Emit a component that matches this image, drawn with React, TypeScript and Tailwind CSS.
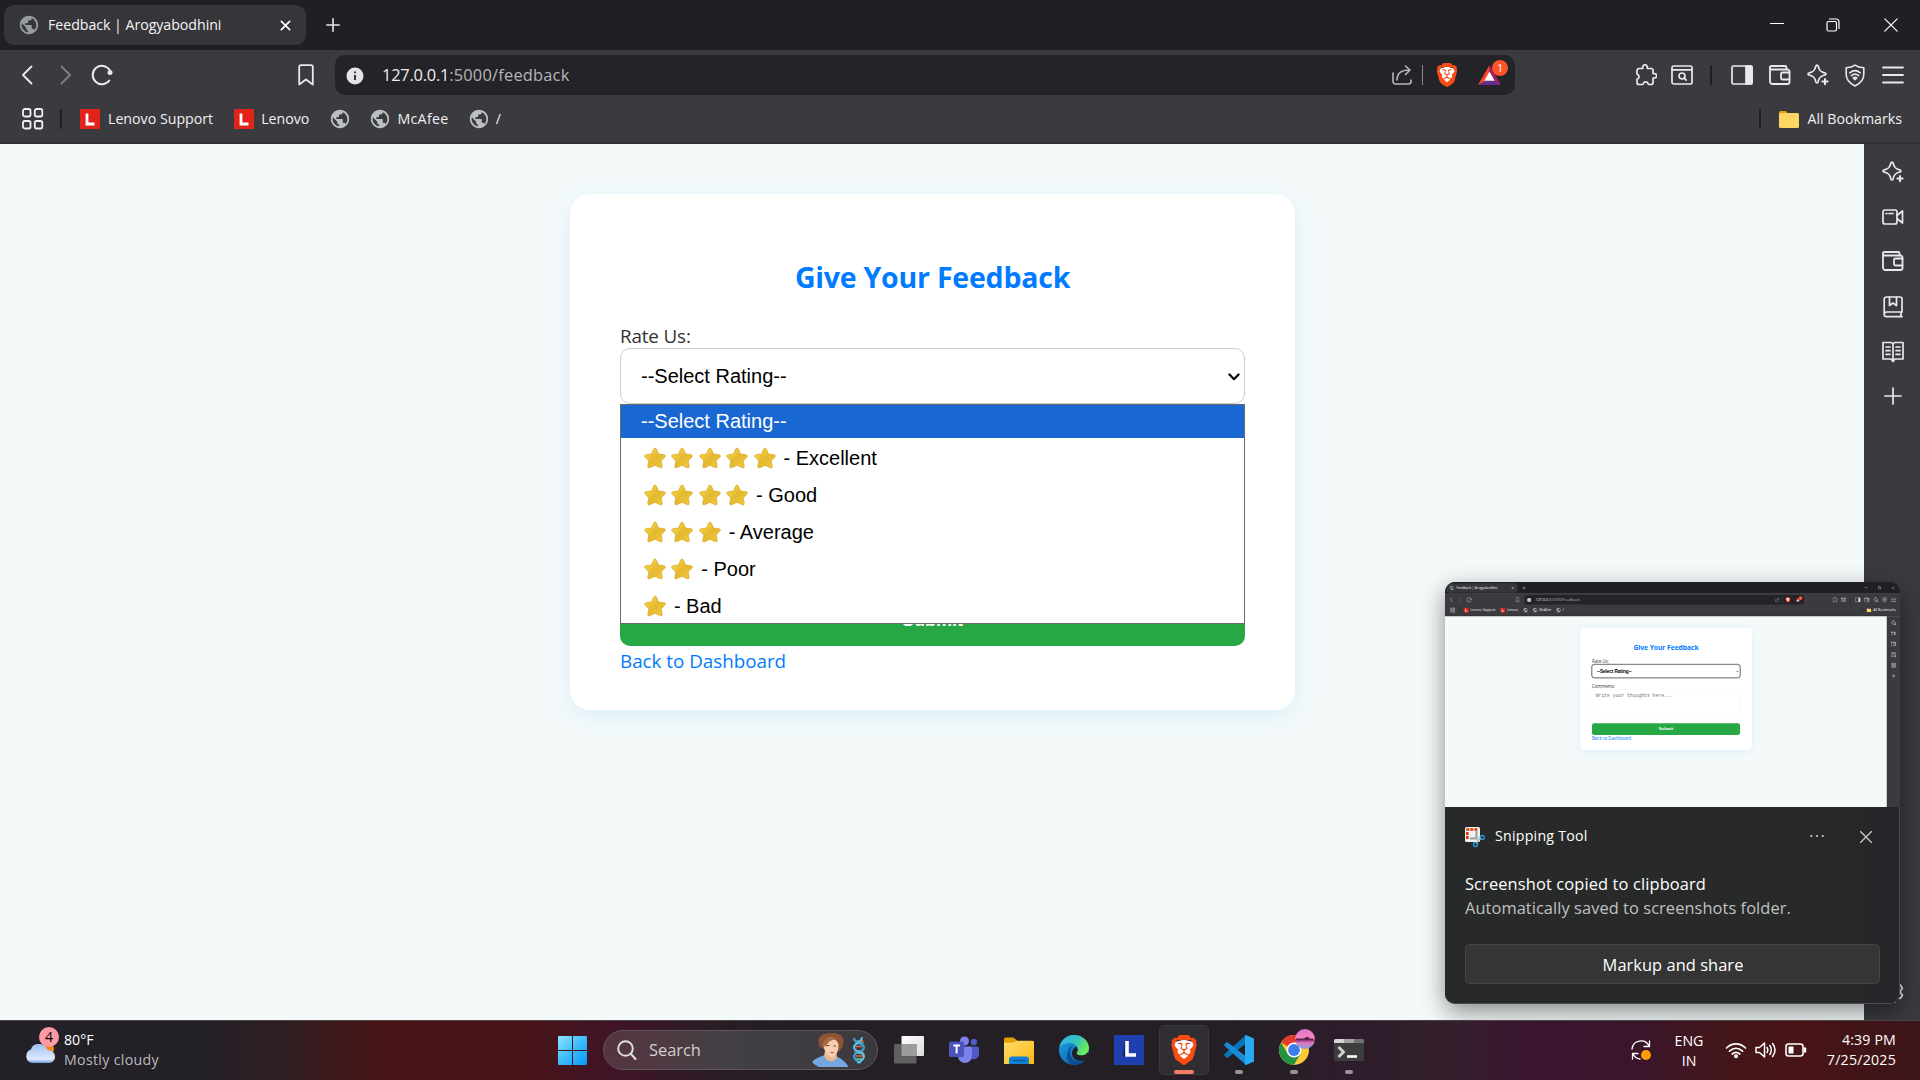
import React, { useLayoutEffect, useRef, useState } from 'react';
import { MdPublic } from 'react-icons/md';
import { SiBrave } from 'react-icons/si';

type TextProps = { w: number; children: string; className?: string };

/** One line of text whose tracking is adjusted so that it fills `w` pixels. */
function T({ w, children, className = '' }: TextProps) {
  const ref = useRef<HTMLSpanElement>(null);
  const [spacing, setSpacing] = useState(0);
  useLayoutEffect(() => {
    const el = ref.current;
    if (!el) return;
    el.style.letterSpacing = '0px';
    const next = (w - el.offsetWidth) / children.length;
    el.style.letterSpacing = `${next}px`;
    setSpacing(next);
  }, [w, children]);
  return (
    <span ref={ref} className={`inline-block whitespace-nowrap ${className}`} style={{ letterSpacing: spacing }}>
      {children}
    </span>
  );
}

type IconProps = { className?: string };

const line = { fill: 'none', stroke: 'currentColor', strokeLinecap: 'round', strokeLinejoin: 'round' } as const;

const Sparkle = ({ className }: IconProps) => (
  <svg viewBox="0 0 22 22" className={`h-[22px] w-[22px] ${className ?? ''}`} {...line} strokeWidth="1.700">
    <path d="M10 1.200c.7 0 1 .5 1.200 1.100.9 4.200 2.300 5.600 6.400 6.500.8.2 1.400.6 1.400 1.200s-.6 1-1.400 1.200c-4.100.9-5.500 2.300-6.400 6.500-.2.7-.5 1.100-1.200 1.100s-1-.4-1.200-1.100c-.9-4.200-2.300-5.600-6.400-6.500C1.600 11 1 10.600 1 10s.6-1 1.400-1.200c4.100-.9 5.500-2.300 6.400-6.500C9 1.700 9.300 1.200 10 1.200z" />
    <path d="M18 14.500v6M15 17.500h6" stroke="#3b3a3f" strokeWidth="5" />
    <path d="M18 15v5.200M15.400 17.600h5.200" strokeWidth="2" />
  </svg>
);

const Wallet = () => (
  <svg viewBox="0 0 22 20" className="h-5 w-[22px]" {...line} strokeWidth="1.800">
    <path d="M1 2.500v14A2.500 2.500 0 0 0 3.500 19h15a2 2 0 0 0 2-2V6.500a2 2 0 0 0-2-2H2.500A1.500 1.500 0 0 1 2.500 1H16a1.500 1.500 0 0 1 1.500 1.500v2" />
    <path d="M20.500 7.500h-7a1.500 1.500 0 0 0-1.500 1.500v4a1.500 1.500 0 0 0 1.500 1.500h7" />
  </svg>
);

const LionShield = ({ className = '' }: IconProps) => (
  <span className={`relative block ${className}`}>
    <svg viewBox="0 0 24 24" className="absolute inset-0 h-full w-full">
      <path d="M5 5.500 12 3.500l7 2 1 4-3 8-5 4-5-4-3-8z" fill="#fff" />
    </svg>
    <SiBrave className="absolute inset-0 h-full w-full text-[#fb4b14]" />
  </span>
);

const Divider = ({ className = '' }: IconProps) => <div className={`h-5 w-[2px] shrink-0 rounded bg-[#1f1e23] ${className}`} />;

const RedL = () => (
  <div className="flex h-5 w-5 shrink-0 items-center justify-center bg-[#e2231a]">
    <svg viewBox="0 0 20 20" className="h-5 w-5">
      <path d="M7 4.500v10.500h7.500" fill="none" stroke="#fff" strokeWidth="2.800" />
    </svg>
  </div>
);

const Globe = ({ className = '' }: IconProps) => <MdPublic className={`h-[22px] w-[22px] shrink-0 ${className}`} />;

function TabStrip() {
  return (
    <div className="flex h-[50px] items-center bg-[#201f24]">
      <div className="ml-1 flex h-10 w-[302px] items-center rounded-[10px] bg-[#36353a]">
        <Globe className="ml-[14px] text-[#959ca2]" />
        <T w={173} className="ml-[8px] text-[14.200px] text-[#f4f4f6]">Feedback | Arogyabodhini</T>
        <svg viewBox="0 0 12 12" className="ml-[59px] h-[11px] w-[11px] text-white" {...line} strokeWidth="1.900">
          <path d="m1.500 1.500 9 9M10.500 1.500l-9 9" />
        </svg>
      </div>
      <svg viewBox="0 0 14 14" className="ml-5 h-[14px] w-[14px] text-[#e6e6e8]" {...line} strokeWidth="1.600">
        <path d="M7 .8v12.400M.8 7h12.400" />
      </svg>
      <svg viewBox="0 0 14 14" className="ml-auto h-[14px] w-[14px] text-white" {...line} strokeWidth="1.200">
        <path d="M.5 5.500h13" />
      </svg>
      <svg viewBox="0 0 14 14" className="ml-[42px] h-[14px] w-[14px] text-white" {...line} strokeWidth="1.200">
        <rect x="1" y="3.500" width="9.500" height="9.500" rx="1.500" />
        <path d="M3.500 1H10a3 3 0 0 1 3 3v6.500" />
      </svg>
      <svg viewBox="0 0 14 14" className="mr-[22px] ml-[44px] h-[14px] w-[14px] text-white" {...line} strokeWidth="1.200">
        <path d="m.8.8 12.400 12.400M13.200.8.8 13.200" />
      </svg>
    </div>
  );
}

function AddressRow() {
  return (
    <div className="flex h-[50px] items-center text-[#e9e9eb]">
      <svg viewBox="0 0 12 20" className="ml-[21px] h-5 w-3" {...line} strokeWidth="1.900">
        <path d="M10.500 1.500 2 10l8.500 8.500" />
      </svg>
      <svg viewBox="0 0 12 20" className="ml-[27px] h-5 w-3 text-[#7f7e84]" {...line} strokeWidth="1.900">
        <path d="M1.500 1.500 10 10l-8.500 8.500" />
      </svg>
      <svg viewBox="0 0 22 22" className="ml-[19px] h-[22px] w-[22px]" {...line} strokeWidth="2">
        <path d="M18.300 16.500A9.200 9.200 0 1 1 18.500 5.800" />
        <circle cx="19" cy="8.500" r="2.500" fill="currentColor" stroke="none" />
      </svg>
      <svg viewBox="0 0 16 22" className="ml-[185px] h-[22px] w-4" {...line} strokeWidth="1.800">
        <path d="M1.200 3A1.800 1.800 0 0 1 3 1.200h10A1.800 1.800 0 0 1 14.800 3v17.500L8 15.500l-6.800 5z" />
      </svg>
      <div className="ml-[21px] flex h-10 w-[1180px] shrink-0 items-center rounded-[10px] bg-[#242328]">
        <svg viewBox="0 0 18 18" className="mt-px ml-[11px] h-[18px] w-[18px]">
          <circle cx="9" cy="9" r="8.500" fill="#e3e3e8" />
          <path d="M9 8v5M9 4.500v1.700" stroke="#242328" strokeWidth="1.800" />
        </svg>
        <T w={67} className="ml-[18px] text-[16.400px] text-[#eeeef0]">127.0.0.1</T>
        <T w={120} className="text-[16.400px] text-[#b6b5ba]">:5000/feedback</T>
        <svg viewBox="0 0 20 20" className="ml-auto h-5 w-5 text-[#b8b8bc]" {...line} strokeWidth="1.600">
          <path d="M1 8v8.500A2.500 2.500 0 0 0 3.500 19h13a2.500 2.500 0 0 0 2.500-2.500V15" />
          <path d="M5 15c0-6 4-10 12.500-10M13.500 1l4.500 4-4.500 4.500" />
        </svg>
        <div className="ml-[10px] h-5 w-[1.500px] bg-[#8b8a90]" />
        <LionShield className="ml-[12px] h-6 w-6" />
        <div className="relative mr-[14px] ml-[19px] h-[20px] w-[23px]">
          <svg viewBox="0 0 23 20" className="h-[20px] w-[23px]">
            <path d="M11.500 0 0 20l7-3.500 4.500-8z" fill="#ff4724" />
            <path d="M11.500 0 23 20l-7-3.500-4.500-8z" fill="#9e1f63" />
            <path d="m0 20 7-4.200h9L23 20z" fill="#662d91" />
            <path d="m11.500 6.500 5.200 9.300H6.300z" fill="#fff" />
          </svg>
          <div className="absolute -top-[5px] left-[14px] flex h-4 w-4 items-center justify-center rounded-full bg-[#fb542b] text-[10px] leading-4 text-white">1</div>
        </div>
      </div>
      <svg viewBox="0 0 22 22" className="ml-[120px] h-[22px] w-[22px]" {...line} strokeWidth="1.700">
        <path d="M2 6.500A2 2 0 0 1 4 4.500h3.300c.5 0 .6-.4.500-.8a2.300 2.300 0 1 1 4.400 0c-.1.400 0 .8.500.8H16a2 2 0 0 1 2 2v2.700c0 .5.400.600.800.5a2.200 2.200 0 1 1 0 4.200c-.4-.1-.8 0-.8.5V18.500a2 2 0 0 1-2 2h-2.300c-.5 0-.6-.4-.6-.9a2.500 2.500 0 0 0-4.800 0c0 .5-.1.900-.6.900H4a2 2 0 0 1-2-2v-3c0-.5.300-.600.700-.7a2.300 2.300 0 0 0 0-4.200C2.300 10.500 2 10.300 2 9.800z" />
      </svg>
      <svg viewBox="0 0 22 20" className="ml-[14px] h-5 w-[22px]" {...line} strokeWidth="1.700">
        <rect x="1" y="1" width="20" height="18" rx="1.800" />
        <path d="M1 4.800h20" />
        <circle cx="11" cy="11" r="3" />
        <path d="m13.200 13.200 2 2" />
      </svg>
      <Divider className="ml-[17px]" />
      <svg viewBox="0 0 22 20" className="ml-[19px] h-5 w-[22px]" {...line} strokeWidth="1.700">
        <rect x="1" y="1" width="20" height="18" rx="1.500" />
        <path d="M15 1h5a1 1 0 0 1 1 1v16a1 1 0 0 1-1 1h-5z" fill="currentColor" />
      </svg>
      <div className="ml-4"><Wallet /></div>
      <div className="ml-4"><Sparkle /></div>
      <svg viewBox="0 0 20 23" className="ml-4 h-[23px] w-5" {...line} strokeWidth="1.600">
        <path d="M10 1.200c2.500 1.800 5.300 2.400 8.800 2.600v6.700c0 5-3.500 8.800-8.800 11.500-5.300-2.700-8.800-6.500-8.800-11.500V3.800C4.700 3.600 7.500 3 10 1.200z" />
        <path d="M4.800 8.800c3.200-2.600 7.200-2.600 10.400 0M6.300 11.600c2.300-1.800 5.100-1.800 7.400 0M8.200 14c1.200-.8 2.400-.8 3.600 0L10 15.700z" />
      </svg>
      <svg viewBox="0 0 22 18" className="ml-[17px] h-[18px] w-[22px]" {...line} strokeWidth="1.800">
        <path d="M1 1.500h20M1 9h20M1 16.500h20" />
      </svg>
    </div>
  );
}

function BookmarksRow() {
  return (
    <div className="flex h-[38px] items-center text-[14.200px] text-[#f1f1f3]">
      <svg viewBox="0 0 22 22" className="ml-[22px] h-[22px] w-[22px]" {...line} strokeWidth="1.800">
        <rect x="1" y="1" width="7.500" height="7.500" rx="1.800" />
        <rect x="12.800" y="1" width="7.500" height="7.500" rx="1.800" />
        <rect x="1" y="13" width="7.500" height="7.500" rx="1.800" />
        <rect x="12.800" y="13" width="7.500" height="7.500" rx="1.800" />
      </svg>
      <Divider className="mr-[18px] ml-4" />
      <RedL />
      <T w={105} className="ml-2">Lenovo Support</T>
      <div className="w-[21px]" />
      <RedL />
      <T w={48} className="ml-[7px]">Lenovo</T>
      <Globe className="ml-[20px] text-[#b9bfc2]" />
      <Globe className="ml-[18px] text-[#b9bfc2]" />
      <T w={51} className="ml-[6px]">McAfee</T>
      <Globe className="ml-[19px] text-[#b9bfc2]" />
      <T w={7} className="ml-[6px]">/</T>
      <Divider className="ml-auto" />
      <svg viewBox="0 0 20 17" className="ml-[18px] h-[17px] w-5">
        <path d="M0 1.500A1.500 1.500 0 0 1 1.500 0H7l2 3H0z" fill="#e0a20c" />
        <rect y="2" width="20" height="15" rx="1.500" fill="#fdd663" />
      </svg>
      <T w={95} className="mr-[18px] ml-2">All Bookmarks</T>
    </div>
  );
}

function SideBar() {
  return (
    <div className="flex w-14 shrink-0 flex-col items-center bg-[#3b3a3f] pt-4 pl-px text-[#e9e9eb]">
      <div className="flex h-[45px] w-[22px] items-start pt-px"><Sparkle /></div>
      <svg viewBox="0 0 22 16" className="mt-[4px] mb-[27px] h-4 w-[22px] shrink-0" {...line} strokeWidth="1.700">
        <rect x="1" y="1" width="14" height="14" rx="2" />
        <path d="m15 6.500 5.500-4.500v12L15 9.500M4 4.500h1M7 4.500h4" />
      </svg>
      <div className="-mt-px h-[45px] w-[22px]"><Wallet /></div>
      <svg viewBox="0 0 20 22" className="h-[22px] w-5 shrink-0" {...line} strokeWidth="1.700">
        <path d="M19 16H3.500a2.300 2.300 0 0 0 0 4.700H19M1.200 18V3a2 2 0 0 1 2-2H17a2 2 0 0 1 2 2v13M18 16v4.500" />
        <path d="M6.500 1v8.500L10 7l3.500 2.500V1" />
      </svg>
      <svg viewBox="0 0 22 22" className="mt-[23px] h-[22px] w-[22px] shrink-0" {...line} strokeWidth="1.700">
        <path d="M1 1.500h8.500L11 3l1.500-1.500H21V18h-8L11 20.500 9 18H1zM11 3v17M4 6h4M4 9.700h4M4 13.400h4M14 6h4M14 9.700h4M14 13.400h4" />
      </svg>
      <svg viewBox="0 0 18 18" className="mt-[24px] h-[18px] w-[18px] shrink-0" {...line} strokeWidth="1.700">
        <path d="M9 1v16M1 9h16" />
      </svg>
      <svg viewBox="0 0 22 22" className="mt-auto mb-[17px] h-[22px] w-[22px] shrink-0" {...line} strokeWidth="1.700">
        <path d="M9 1h4l.7 2.800 2 1.100 2.800-.8 2 3.400-2 2v2.500l2 2-2 3.400-2.800-.8-2 1.100L13 21H9l-.7-2.800-2-1.100-2.800.8-2-3.400 2-2V9.500l-2-2 2-3.400 2.800.8 2-1.100z" />
        <circle cx="11" cy="11" r="3" />
      </svg>
    </div>
  );
}

const Star = () => (
  <svg viewBox="0.700 0.500 20.600 20.600" className="mr-[2.400px] ml-[3px] h-[22px] w-[22px] shrink-0">
    <defs>
      <linearGradient id="starFace" x1="0" y1="0" x2="1" y2="1">
        <stop offset="0" stopColor="#ffdf4e" />
        <stop offset=".5" stopColor="#e4b92f" />
        <stop offset="1" stopColor="#f3c93c" />
      </linearGradient>
    </defs>
    <path
      d="M11 1.500c.7 0 1.100.5 1.400 1.200l1.900 4.400 4.700.5c1.600.2 2.300 1.500 1.100 2.600l-3.300 3.200.9 4.800c.3 1.700-.8 2.400-2.200 1.600L11 17.600l-4.500 2.200c-1.400.8-2.500.1-2.200-1.600l.9-4.800-3.300-3.200C.7 9.100 1.400 7.800 3 7.600l4.700-.5 1.900-4.400c.3-.7.700-1.200 1.400-1.200z"
      fill="url(#starFace)"
      stroke="#dba92d"
      strokeWidth=".7"
    />
  </svg>
);

const ratings: { stars: number; label: string }[] = [
  { stars: 5, label: '- Excellent' },
  { stars: 4, label: '- Good' },
  { stars: 3, label: '- Average' },
  { stars: 2, label: '- Poor' },
  { stars: 1, label: '- Bad' },
];

function RatingMenu() {
  return (
    <div className="absolute top-[55px] -left-px z-10 h-[220px] w-[625px] border border-[#6b6b6b] bg-white font-['Liberation_Sans',sans-serif] text-[20px] text-black">
      <div className="h-[33px] bg-[#1967d2] pl-5 leading-8 text-white"><T w={146}>--Select Rating--</T></div>
      {ratings.map((r) => (
        <div key={r.stars} className="flex h-[37px] items-center pt-[2px] pl-5">
          {Array.from({ length: r.stars }, (_, i) => <Star key={i} />)}
          <span className="ml-[5.500px] leading-[34px] whitespace-nowrap">{r.label}</span>
        </div>
      ))}
    </div>
  );
}

function FeedbackCard({ open }: { open: boolean }) {
  return (
    <div className="mx-auto mt-[50px] flex h-[516px] w-[725px] flex-col rounded-[20px] bg-white px-[50px] pt-[63px] text-[18.800px] text-[#333] shadow-[0_6px_25px_rgba(0,123,255,0.1)]">
      <h2 className="mb-[25px] text-center text-[28.500px] leading-10 font-bold text-[#007bff]"><T w={275}>Give Your Feedback</T></h2>
      <div className="h-[26px] leading-[28px]"><T w={71}>Rate Us:</T></div>
      <div
        className={`relative flex h-14 w-[625px] items-center rounded-[10px] border bg-white pl-5 font-['Liberation_Sans',sans-serif] text-[20px] text-black ${open ? 'border-[#ccc]' : 'border-[#101010] outline-2 outline-[#101010]'}`}
      >
        <T w={146} className={open ? '' : 'font-bold'}>--Select Rating--</T>
        <svg viewBox="0 0 12 8" className="mt-px mr-1 ml-auto h-2 w-3 text-black" {...line} strokeWidth="2.200">
          <path d="m1.500 1.500 4.500 4.700 4.500-4.700" />
        </svg>
        {open && <RatingMenu />}
      </div>
      {open ? (
        <div className="h-[172px] shrink-0" />
      ) : (
        <>
          <div className="mt-[21px] h-[26px] leading-[28px]"><T w={97}>Comments:</T></div>
          <div className="h-[125px] rounded-[10px] border border-[#eee] pt-[15px] pl-[15px] font-['Liberation_Mono',monospace] text-[20px] leading-7 text-[#757575]">
            Write your thoughts here...
          </div>
        </>
      )}
      <div className="mt-5 h-[50px] shrink-0 rounded-[10px] bg-[#28a745] text-center font-['Liberation_Sans',sans-serif] text-[18px] leading-[48px] font-bold text-white">Submit</div>
      <div className="mt-px h-[26px] leading-[28px] text-[#007bff]"><T w={166}>Back to Dashboard</T></div>
    </div>
  );
}

function BrowserWindow({ open }: { open: boolean }) {
  return (
    <div className="flex h-[1020px] w-[1920px] flex-col overflow-hidden bg-[#f4fafa]">
      <TabStrip />
      <div className="h-[94px] shrink-0 border-b-2 border-[#2f2e33] bg-[#3b3a3f]">
        <AddressRow />
        <BookmarksRow />
      </div>
      <div className="flex min-h-0 flex-1">
        <div className="min-w-0 flex-1 pl-px"><FeedbackCard open={open} /></div>
        <SideBar />
      </div>
    </div>
  );
}

function Toast() {
  return (
    <div className="absolute top-[582px] left-[1445px] w-[455px] overflow-hidden rounded-[10px] bg-[#282a29] shadow-[0_8px_24px_rgba(0,0,0,0.45)]">
      <div className="h-[225px] overflow-hidden">
        <div className="origin-top-left scale-[0.237]"><BrowserWindow open={false} /></div>
      </div>
      <div className="h-[197px] rounded-b-[10px] border-r border-b border-[#4a4a4c] bg-linear-to-r from-[#282a29] from-75% to-[#252629] px-5 text-[16.400px] text-white">
        <div className="flex h-[58px] items-center">
          <svg viewBox="0 0 22 22" className="mt-px -ml-px h-[22px] w-[22px]">
            <rect x="1" y="1" width="15" height="15" rx="1.500" fill="#f1f1f1" />
            <path d="M2.300 3.500h11M3.300 6v8" stroke="#d83b01" strokeWidth="2.600" strokeDasharray="3 1" />
            <path d="M12.500 5v7M6 12.500h8" stroke="#9d9d9f" strokeWidth="2" />
            <circle cx="18.300" cy="11.500" r="2" fill="none" stroke="#1c9de0" strokeWidth="1.400" />
            <circle cx="11.500" cy="18.500" r="2" fill="none" stroke="#1c9de0" strokeWidth="1.400" />
            <path d="m12.500 17 2-3 2.500-1.500" stroke="#b8b8b8" strokeWidth="1.400" fill="none" />
          </svg>
          <T w={93} className="ml-[9px] text-[14.200px]">Snipping Tool</T>
          <svg viewBox="0 0 14 4" className="ml-auto h-1 w-[14px]" fill="#cfcfcf">
            <circle cx="1.300" cy="2" r="1.100" /><circle cx="7" cy="2" r="1.100" /><circle cx="12.700" cy="2" r="1.100" />
          </svg>
          <svg viewBox="0 0 12 12" className="mt-px mr-[7px] ml-9 h-3 w-3 text-[#cfcfcf]" {...line} strokeWidth="1.300">
            <path d="m.5.5 11 11M11.500.5l-11 11" />
          </svg>
        </div>
        <div className="mt-[7px] h-6 leading-6"><T w={241}>Screenshot copied to clipboard</T></div>
        <div className="h-6 leading-6 text-[#c0c1c1]"><T w={326}>Automatically saved to screenshots folder.</T></div>
        <div className="mt-6 h-10 w-[415px] rounded-[5px] border border-[#454746] bg-[#343635] text-center leading-[40px]"><T w={141} className="ml-px">Markup and share</T></div>
      </div>
    </div>
  );
}

function AppSlot({ children, active, running }: { children: React.ReactNode; active?: boolean; running?: boolean }) {
  return (
    <div className={`relative mx-[2.500px] flex h-[50px] w-[50px] shrink-0 items-center justify-center rounded-[5px] ${active ? 'border border-[#3a373c] bg-[#302d33]' : ''}`}>
      {children}
      {active && <div className="absolute bottom-0 h-1 w-5 rounded-full bg-[#f47c65]" />}
      {running && <div className="absolute bottom-px h-1 w-2 rounded-full bg-[#98959a]" />}
    </div>
  );
}

function Apps() {
  return (
    <>
      <AppSlot>
        <svg viewBox="0 0 30 28" className="h-7 w-[30px]">
          <defs>
            <linearGradient id="paneFront" x1="0" y1="0" x2="1" y2="1">
              <stop offset="0" stopColor="#fff" /><stop offset="1" stopColor="#dcdcdc" />
            </linearGradient>
          </defs>
          <rect x="7.500" width="22.500" height="20" rx="1" fill="url(#paneFront)" />
          <rect y="8" width="22.500" height="19.500" rx="1" fill="#5f5f60" />
          <rect x="7.500" y="8" width="15" height="12" fill="#9c9c9c" />
        </svg>
      </AppSlot>
      <AppSlot>
        <svg viewBox="0 0 30 28" className="h-7 w-[30px]">
          <circle cx="15.500" cy="5" r="4.500" fill="#7b83eb" />
          <circle cx="24.800" cy="6" r="3.200" fill="#5059c9" />
          <path d="M20 10.500h8.500a1.500 1.500 0 0 1 1.500 1.500v6a5.500 5.500 0 0 1-9 4z" fill="#5059c9" />
          <path d="M9 10.500h12.500a1.500 1.500 0 0 1 1.500 1.500v8a7 7 0 0 1-14 0z" fill="#7b83eb" />
          <rect y="5.500" width="15" height="15.500" rx="1.500" fill="#4b53bc" />
          <path d="M4.300 9.500h6.600M7.600 9.500v8" stroke="#fff" strokeWidth="1.900" />
        </svg>
      </AppSlot>
      <AppSlot>
        <svg viewBox="0 0 30 27" className="h-[27px] w-[30px]">
          <defs>
            <linearGradient id="folderFront" x1="0" y1="0" x2="1" y2="1">
              <stop offset="0" stopColor="#ffdc6b" /><stop offset="1" stopColor="#fdb813" />
            </linearGradient>
          </defs>
          <path d="M0 2a1.500 1.500 0 0 1 1.500-1.500h8L13 3.500v4H0z" fill="#e0a000" />
          <path d="M0 5.500h9.500l3-1.800H28.500A1.500 1.500 0 0 1 30 5.200V27H0z" fill="url(#folderFront)" />
          <path d="M5 27v-4.500A3 3 0 0 1 8 19.500h14a3 3 0 0 1 3 3V27z" fill="#1381d4" />
          <path d="M8.500 23.500h13" stroke="#0a57a2" strokeWidth="1.500" />
        </svg>
      </AppSlot>
      <AppSlot>
        <svg viewBox="0 0 30 30" className="h-[30px] w-[30px]">
          <defs>
            <linearGradient id="edgeTop" x1="0" y1="0" x2="1" y2=".5">
              <stop offset="0" stopColor="#2fb4ee" /><stop offset=".55" stopColor="#33c3c0" /><stop offset="1" stopColor="#6bea5a" />
            </linearGradient>
            <linearGradient id="edgeSide" x1="0" y1="0" x2="1" y2="1">
              <stop offset="0" stopColor="#1ba0e6" /><stop offset="1" stopColor="#0c59a4" />
            </linearGradient>
          </defs>
          <circle cx="15" cy="15" r="15" fill="url(#edgeSide)" />
          <path d="M9 17c0-3 2-5.500 5-6.500 0 0-4.500 4-2.500 10s9 7.500 15.500 3.500A15 15 0 0 1 15 30C9 29 6 23 9 17z" fill="#0e4d92" />
          <path d="M.4 12.500C1.500 5.500 7.500 0 15 0c9 0 15 6.500 15 13 0 5-4 7.500-8 7.500-3 0-4.500-1-4.500-2.200 0-.8 1.200-1.300 1.200-3.800 0-3.500-3.200-6.500-8.200-6.500C5.500 8 1.500 10.500.4 12.500z" fill="url(#edgeTop)" />
          <path d="M18.700 14.500c0 2.500-1.200 3-1.200 3.800 0 1.200 1.500 2.200 4.500 2.200 3 0 5.200-1 6.800-3.200l1.700 3.500-2.500 3.500c-6.500 3.500-13.500 1-14.800-4.300-.9-4 1.300-7 4.300-8.500.8.900 1.200 1.800 1.200 3z" fill="#231f24" />
        </svg>
      </AppSlot>
      <AppSlot>
        <svg viewBox="0 0 30 30" className="h-[30px] w-[30px]">
          <rect width="30" height="30" fill="#1f3fae" />
          <path d="m11 6-2 15 2 1z" fill="#0d2260" />
          <path d="M13 6v14h9" fill="none" stroke="#fff" strokeWidth="3.600" />
        </svg>
      </AppSlot>
      <AppSlot active>
        <LionShield className="h-[30px] w-[30px]" />
      </AppSlot>
      <AppSlot running>
        <svg viewBox="0 0 30 30" className="h-[30px] w-[30px]">
          <path d="M22 8.500 4 22.500a1.300 1.300 0 0 1-1.600 0L.6 20.900a1.300 1.300 0 0 1 0-1.900L22 0z" fill="#0c74bb" />
          <path d="M22 21.500 4 7.500a1.300 1.300 0 0 0-1.600 0L.6 9.100a1.300 1.300 0 0 0 0 1.900L22 30z" fill="#1a8ad6" />
          <path d="M21 0.300 22 0l8 3.500v23L22 30l-1-.3z" fill="#29a9f2" />
        </svg>
      </AppSlot>
      <AppSlot running>
        <div className="relative h-[30px] w-[30px]">
          <svg viewBox="0 0 30 30" className="h-[30px] w-[30px]">
            <circle cx="15" cy="15" r="15" fill="#fcc934" />
            <path d="M15 15 2 7.500A15 15 0 0 1 28 7.500H15z" fill="#e33b2e" />
            <path d="M2 7.500A15 15 0 0 0 14.800 30l6.700-11.300L8.500 18.700z" fill="#229342" />
            <circle cx="15" cy="15" r="7.400" fill="#fff" />
            <circle cx="15" cy="15" r="5.900" fill="#3b7ded" />
          </svg>
          <svg viewBox="0 0 20 20" className="absolute -top-[6px] left-4 h-5 w-5">
            <defs>
              <linearGradient id="sunset" x1="0" y1="0" x2="0" y2="1">
                <stop offset="0" stopColor="#d878c8" /><stop offset=".3" stopColor="#ef7fc6" /><stop offset=".48" stopColor="#f28ab0" />
                <stop offset=".55" stopColor="#8a2f78" /><stop offset=".7" stopColor="#e07cc0" /><stop offset="1" stopColor="#7fa0e6" />
              </linearGradient>
            </defs>
            <circle cx="10" cy="10" r="10" fill="url(#sunset)" />
            <path d="M1 9.500h8l2-1.500h3v1.500h4v1.500H1z" fill="#5a2450" />
          </svg>
        </div>
      </AppSlot>
      <AppSlot running>
        <svg viewBox="0 0 30 22" className="h-[22px] w-[30px]">
          <rect width="30" height="22" rx="1.500" fill="#3c3d3e" />
          <path d="M0 4V1.500A1.500 1.500 0 0 1 1.500 0H10v4z" fill="#d5d5d5" />
          <path d="M10 0h10v4H10z" fill="#a5a3a5" />
          <path d="M20 0h8.500A1.500 1.500 0 0 1 30 1.500V4H20z" fill="#717173" />
          <path d="m4.500 8 5 5-5 5" fill="none" stroke="#d4d4d4" strokeWidth="2.800" />
          <path d="M13 17.500h10" stroke="#fff" strokeWidth="2.600" />
        </svg>
      </AppSlot>
    </>
  );
}

function SearchBox() {
  return (
    <div className="ml-4 flex h-10 w-[275px] shrink-0 items-center rounded-full border border-[#5f5560] bg-linear-to-r from-[#56343f] via-[#434045] via-45% to-[#3c393e]">
      <svg viewBox="0 0 20 20" className="ml-[13px] h-5 w-5 text-[#e0dde0]" {...line} strokeWidth="2">
        <circle cx="8.500" cy="8.500" r="7.300" /><path d="m14 14 4.500 5" />
      </svg>
      <T w={52} className="ml-[12px] text-[16.400px] text-[#d3cfd2]">Search</T>
      <svg viewBox="0 0 37 34" className="ml-auto h-[34px] w-[37px]">
        <path d="M0 29c4-4 9-6 13-7l10 1c6 2 11 6 13.500 11H7C4 32.500 1.500 31 0 29z" fill="#74a7e0" />
        <path d="M13 18h11l1 6c-2 6-10 6-13-1z" fill="#edb592" />
        <path d="M8 14C4 6 9 1 14 .8 22-1 30 0 31.500 7c.5 5-2 10-6 12L12 16z" fill="#8d5535" />
        <path d="M11.500 10c2-4 5-5.500 7.500-5.500S26 8 26.500 12c.3 6-3 12-6.500 12s-9-6-8.500-14z" fill="#f7cfb0" />
        <path d="M15 12.500h2.500M21.500 13h2.500" stroke="#6d4636" strokeWidth="1" fill="none" />
        <path d="M18.500 19.300c1.200.6 2.400.6 3.200 0" stroke="#c0605a" strokeWidth="1.200" fill="none" />
        <path d="M11 12C12 5 18 2 25 7c-5-1-9 1-11 7z" fill="#a86b43" />
      </svg>
      <svg viewBox="0 0 14 28" className="mr-[11px] ml-[3px] h-7 w-[14px]" fill="none" strokeLinecap="round">
        <path d="M3 5h8M4 10.500h6M3 15h8M4 20h7" stroke="#e5633c" strokeWidth="1.400" />
        <path d="M4 7h7M3 17h8M4 23h6" stroke="#7fd35c" strokeWidth="1.400" />
        <path d="M2 3c2 5 10 4 10 8.500S2 16 2 20s3 5 6 6.500" stroke="#2f9fe0" strokeWidth="2.200" />
        <path d="M10 2C9 7 2 7 2 11.500S12 16 12 20s-3 5-6 6.500" stroke="#5cc3ef" strokeWidth="2" />
      </svg>
    </div>
  );
}

function Taskbar() {
  return (
    <div className="flex h-[60px] items-center border-t border-[#4b4145] bg-[linear-gradient(90deg,#242027_0%,#242027_11%,#301e21_15%,#491415_20%,#47141a_28%,#401428_32%,#2a1c24_37%,#231f25_42%,#231f25_64%,#2f1c2b_71%,#33202c_75%,#3b1530_80%,#3b1629_86%,#441619_90%,#481416_94%,#3b1519_100%)] pb-px text-white">
      <div className="relative ml-6 h-10 w-8 shrink-0">
        <svg viewBox="0 0 32 40" className="h-10 w-8">
          <defs>
            <linearGradient id="cloud" x1="0" y1="0" x2="0" y2="1">
              <stop offset="0" stopColor="#9fc1f6" /><stop offset=".8" stopColor="#dfeafb" /><stop offset="1" stopColor="#6f97dc" />
            </linearGradient>
          </defs>
          <circle cx="24" cy="19" r="6" fill="#f7860f" />
          <path d="M8 33a7 7 0 0 1-1-13.500C8 15 12 13.500 16 14c4 .3 6.500 3 7.500 6 4 0 7.500 2.500 7.500 6.500S28 33 25 33z" fill="url(#cloud)" />
        </svg>
        <div className="absolute -top-[3px] left-[15px] flex h-5 w-5 items-center justify-center rounded-full bg-[#ff99a4] text-[14px] leading-5 text-black">4</div>
      </div>
      <div className="ml-2 flex w-[100px] shrink-0 flex-col text-[14.200px] leading-5">
        <div><T w={30}>80°F</T></div>
        <div className="text-[#bcb9bd]"><T w={95}>Mostly cloudy</T></div>
      </div>
      <svg viewBox="0 0 29 29" className="ml-[394px] h-[29px] w-[29px] shrink-0">
        <defs>
          <linearGradient id="panes" x1="0" y1="0" x2="1" y2="1">
            <stop offset="0" stopColor="#8fe6ff" /><stop offset=".5" stopColor="#3cbcfb" /><stop offset="1" stopColor="#0a95fb" />
          </linearGradient>
        </defs>
        <path d="M0 1a1 1 0 0 1 1-1h13v14H0zM15 0h13a1 1 0 0 1 1 1v13H15zM0 15h14v14H1a1 1 0 0 1-1-1zM15 15h14v13a1 1 0 0 1-1 1H15z" fill="url(#panes)" />
      </svg>
      <SearchBox />
      <div className="ml-[3.500px] flex"><Apps /></div>
      <svg viewBox="0 0 22 22" className="ml-auto h-[22px] w-[22px]" {...line} strokeWidth="1.300">
        <path d="M2 10a9 9 0 0 1 17-3M19.500 2v5.500H14M10 20a9 9 0 0 1-7-5M2.500 20v-5.500H8" />
        <circle cx="16" cy="16" r="5" fill="#ff9a0b" stroke="none" />
      </svg>
      <div className="mt-px ml-[22px] flex w-[30px] flex-col items-center text-[14.200px] leading-5">
        <T w={29}>ENG</T>
        <T w={15}>IN</T>
      </div>
      <svg viewBox="0 0 22 18" className="ml-[21px] h-[18px] w-[22px]" {...line} strokeWidth="1.700">
        <path d="M1.500 7c5.500-5.500 13.500-5.500 19 0M4.500 10.200c4-3.800 9-3.800 13 0M7.300 13c2.300-2 5-2 7.400 0" />
        <circle cx="11" cy="15.300" r="2" fill="currentColor" stroke="none" />
      </svg>
      <svg viewBox="0 0 22 18" className="ml-[8px] h-[18px] w-[22px]" {...line} strokeWidth="1.500">
        <path d="M1 6.500v5h3.500L9.500 16V2L4.500 6.500zM12 6.500c1 1.500 1 3.500 0 5M14.800 4.500c2 2.500 2 6.500 0 9M17.600 2.500c3 4 3 9 0 13" />
      </svg>
      <svg viewBox="0 0 22 14" className="ml-[8px] h-[14px] w-[22px]" {...line} strokeWidth="1.600">
        <rect x="1" y="1" width="17" height="12" rx="2.500" />
        <rect x="3.500" y="3.500" width="5" height="7" fill="currentColor" stroke="none" />
        <path d="M20 5.500v3" strokeWidth="2.400" />
      </svg>
      <div className="mr-6 ml-4 flex w-[73px] flex-col items-end text-[14.200px] leading-5">
        <T w={54}>4:39 PM</T>
        <T w={69}>7/25/2025</T>
      </div>
    </div>
  );
}

export default function App() {
  return (
    <div className="relative h-[1080px] w-[1920px] overflow-hidden bg-[#f4fafa] font-['Open_Sans','Noto_Sans',sans-serif]">
      <BrowserWindow open />
      <Toast />
      <div className="relative z-20"><Taskbar /></div>
    </div>
  );
}
